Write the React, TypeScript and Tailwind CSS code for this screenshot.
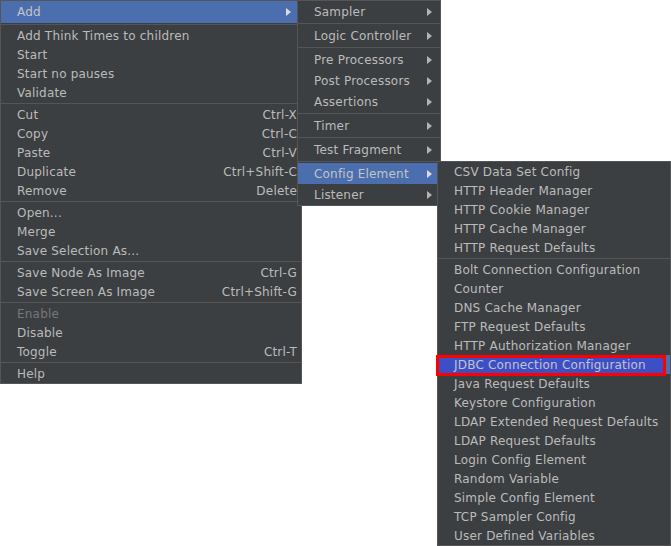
import React from 'react';

type Entry =
  | { sep: true }
  | { sep?: false; label: string; shortcut?: string; arrow?: boolean; active?: boolean; disabled?: boolean; marked?: boolean };

const S: Entry = { sep: true };

const mainMenu: Entry[] = [
  { label: 'Add', arrow: true, active: true },
  S,
  { label: 'Add Think Times to children' },
  { label: 'Start' },
  { label: 'Start no pauses' },
  { label: 'Validate' },
  S,
  { label: 'Cut', shortcut: 'Ctrl-X' },
  { label: 'Copy', shortcut: 'Ctrl-C' },
  { label: 'Paste', shortcut: 'Ctrl-V' },
  { label: 'Duplicate', shortcut: 'Ctrl+Shift-C' },
  { label: 'Remove', shortcut: 'Delete' },
  S,
  { label: 'Open...' },
  { label: 'Merge' },
  { label: 'Save Selection As...' },
  S,
  { label: 'Save Node As Image', shortcut: 'Ctrl-G' },
  { label: 'Save Screen As Image', shortcut: 'Ctrl+Shift-G' },
  S,
  { label: 'Enable', disabled: true },
  { label: 'Disable' },
  { label: 'Toggle', shortcut: 'Ctrl-T' },
  S,
  { label: 'Help' },
];

const addMenu: Entry[] = [
  { label: 'Sampler', arrow: true },
  S,
  { label: 'Logic Controller', arrow: true },
  S,
  { label: 'Pre Processors', arrow: true },
  { label: 'Post Processors', arrow: true },
  { label: 'Assertions', arrow: true },
  S,
  { label: 'Timer', arrow: true },
  S,
  { label: 'Test Fragment', arrow: true },
  S,
  { label: 'Config Element', arrow: true, active: true },
  { label: 'Listener', arrow: true },
];

const configMenu: Entry[] = [
  { label: 'CSV Data Set Config' },
  { label: 'HTTP Header Manager' },
  { label: 'HTTP Cookie Manager' },
  { label: 'HTTP Cache Manager' },
  { label: 'HTTP Request Defaults' },
  S,
  { label: 'Bolt Connection Configuration' },
  { label: 'Counter' },
  { label: 'DNS Cache Manager' },
  { label: 'FTP Request Defaults' },
  { label: 'HTTP Authorization Manager' },
  { label: 'JDBC Connection Configuration', active: true, marked: true },
  { label: 'Java Request Defaults' },
  { label: 'Keystore Configuration' },
  { label: 'LDAP Extended Request Defaults' },
  { label: 'LDAP Request Defaults' },
  { label: 'Login Config Element' },
  { label: 'Random Variable' },
  { label: 'Simple Config Element' },
  { label: 'TCP Sampler Config' },
  { label: 'User Defined Variables' },
];

const Arrow = ({ light, className }: { light?: boolean; className: string }) => (
  <svg width="5" height="8" viewBox="0 0 5 8" className={`shrink-0 ${className}`}>
    <path d="M0 0 L5 4 L0 8 Z" fill={light ? '#dcdcdc' : '#b4b4b4'} />
  </svg>
);

const Menu = ({ items, rowClass, firstRowClass, arrowGap }: { items: Entry[]; rowClass: string; firstRowClass?: string; arrowGap: string }) => (
  <div className="flex flex-col">
    {items.map((it, i) => {
      if (it.sep) {
        return (
          <div key={i} className="h-[3px] pt-px">
            <div className="h-px bg-[#555555]" />
          </div>
        );
      }
      const h = i === 0 && firstRowClass ? firstRowClass : rowClass;
      return (
        <div
          key={i}
          className={`relative flex items-center justify-between pl-4 pr-1 ${h} ${it.active ? 'bg-[#4b6eaf]' : ''}`}
        >
          {it.marked && (
            <div className="absolute left-[-2px] right-[4px] top-0 bottom-[-2px] border-[3px] border-[#ff0000] bg-[#3d4fc7]" />
          )}
          <span className={`relative whitespace-nowrap ${it.disabled ? 'text-[#777777]' : it.active ? 'text-[#c4c4c4]' : 'text-[#bbbbbb]'}`}>
            {it.label}
          </span>
          {it.shortcut && <span className="relative whitespace-nowrap text-[#bbbbbb]">{it.shortcut}</span>}
          {it.arrow && <Arrow light={it.active} className={arrowGap} />}
        </div>
      );
    })}
  </div>
);

export default function App() {
  return (
    <div className="relative w-[671px] h-[546px] overflow-hidden bg-white font-['DejaVu_Sans','Liberation_Sans',sans-serif] text-[12px] leading-none tracking-[0.2px]">
      <div className="absolute left-0 top-0 w-[302px] border border-[#555555] bg-[#3c3f41]">
        <Menu items={mainMenu} rowClass="h-[19px]" firstRowClass="h-[22px]" arrowGap="mr-[6px]" />
      </div>
      <div className="absolute left-[297px] top-0 w-[144px] border border-[#555555] bg-[#3c3f41]">
        <Menu items={addMenu} rowClass="h-[21px]" arrowGap="mr-[4px]" />
      </div>
      <div className="absolute left-[437px] top-[161px] w-[234px] border border-[#555555] bg-[#3c3f41]">
        <Menu items={configMenu} rowClass="h-[19px]" arrowGap="mr-1" />
      </div>
    </div>
  );
}
